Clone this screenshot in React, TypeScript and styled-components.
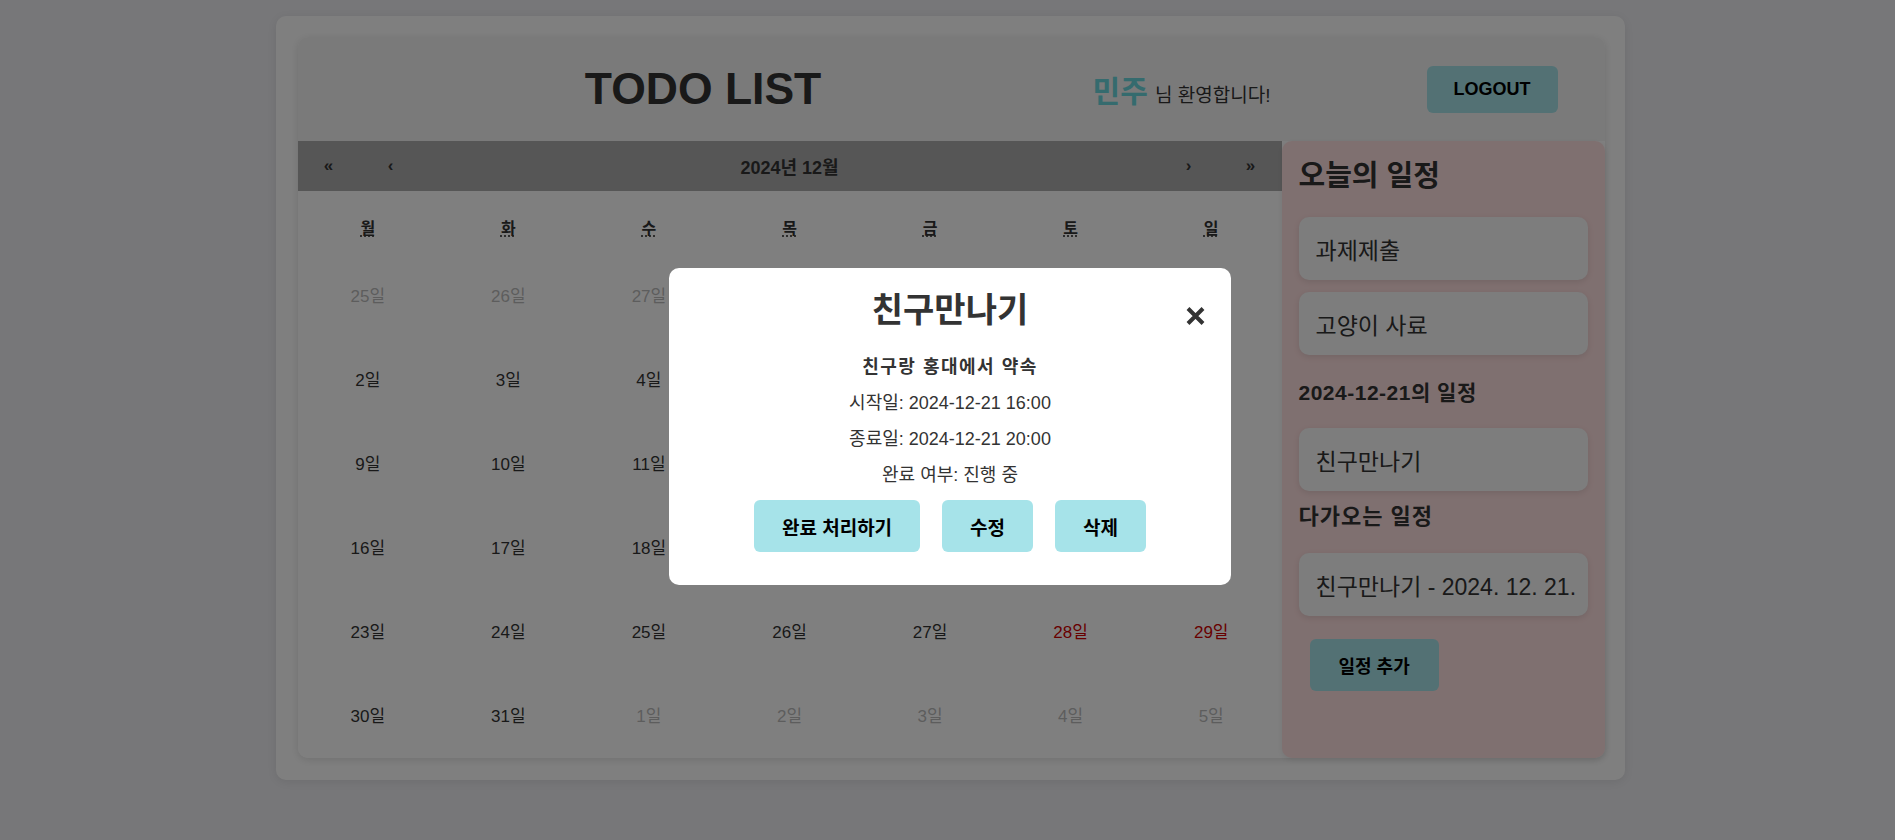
import React from "react";
import styled, { createGlobalStyle } from "styled-components";

const Global = createGlobalStyle`
  html, body { margin: 0; padding: 0; }
  body {
    background: #eeeef2;
    font-family: "Liberation Sans", "Noto Sans CJK KR", sans-serif;
    color: #333;
  }
  * { box-sizing: border-box; }
  button { font-family: inherit; cursor: pointer; }
`;

const Page = styled.div`
  padding-top: 16px;
  min-height: 840px;
`;

const Container = styled.div`
  width: 1349px;
  margin-left: calc(50% - 672px);
  background: #fff;
  border-radius: 10px;
  padding: 21px 20px 22px 22px;
  box-shadow: 0 2px 10px rgba(0, 0, 0, 0.08);
`;

const Board = styled.div`
  border-radius: 10px;
  box-shadow: 0 2px 8px rgba(0, 0, 0, 0.12);
`;

const Header = styled.header`
  height: 104px;
  background: #f5f5f5;
  border-radius: 10px 10px 0 0;
  display: flex;
  align-items: center;
  padding: 0 47px 0 16px;
`;

const TitleWrap = styled.div`
  flex: 1;
  text-align: center;
`;

const Title = styled.h1`
  margin: 0;
  font-size: 44.5px;
  line-height: 52px;
  font-weight: 700;
  color: #333;
`;

const Welcome = styled.div`
  margin-right: 156px;
  font-size: 19px;
  color: #333;
  white-space: nowrap;
`;

const UserName = styled.span`
  font-size: 30px;
  font-weight: 700;
  color: #6ad6dc;
  margin-right: 2px;
`;

const PrimaryButton = styled.button<{ $h: number; $px: number; $fs?: number }>`
  height: ${(p) => p.$h}px;
  padding: 0 ${(p) => p.$px}px;
  border: 0;
  border-radius: 6px;
  background: #a6e3e9;
  color: #000;
  font-size: ${(p) => p.$fs ?? 18}px;
  font-weight: 700;
  white-space: nowrap;
`;

const Main = styled.div`
  display: flex;
  align-items: stretch;
`;

const Calendar = styled.div`
  width: 984px;
  flex-shrink: 0;
  background: #fff;
  border-radius: 0 0 0 10px;
  padding-bottom: 2px;
`;

const Nav = styled.div`
  display: flex;
  height: 50px;
  background: #adadad;
`;

const NavBtn = styled.button`
  width: 62px;
  border: 0;
  background: none;
  font-size: 17px;
  font-weight: 700;
  color: #333;
  padding: 0;
`;

const NavLabel = styled.div`
  flex: 1;
  display: flex;
  align-items: center;
  justify-content: center;
  font-size: 18px;
  font-weight: 700;
  color: #333;
`;

const Weekdays = styled.div`
  display: grid;
  grid-template-columns: repeat(7, 1fr);
  height: 61px;
  align-items: end;
  padding-bottom: 13px;
`;

const Weekday = styled.div`
  text-align: center;
  font-size: 16px;
  line-height: 20px;
  font-weight: 700;
  color: #333;

  abbr {
    text-decoration: underline dotted;
    text-underline-offset: 2px;
  }
`;

const Days = styled.div`
  display: grid;
  grid-template-columns: repeat(7, 1fr);
  grid-auto-rows: 84px;
`;

const Day = styled.div<{ $tone: "normal" | "weekend" | "other" }>`
  display: flex;
  align-items: center;
  justify-content: center;
  font-size: 17px;
  color: ${(p) =>
    p.$tone === "weekend" ? "#d10000" : p.$tone === "other" ? "#bbbbbb" : "#333"};
`;

const Sidebar = styled.aside`
  flex: 1;
  min-width: 0;
  background: #ffe0e0;
  border-radius: 10px;
  padding: 15px 17px;
  display: flex;
  flex-direction: column;
  box-shadow: 0 2px 6px rgba(0, 0, 0, 0.08);
`;

const SectionTitle = styled.h2<{ $size: number; $lh: number; $ls: number; $mt: number }>`
  margin: ${(p) => p.$mt}px 0 21px;
  font-size: ${(p) => p.$size}px;
  line-height: ${(p) => p.$lh}px;
  letter-spacing: ${(p) => p.$ls}px;
  font-weight: 700;
  color: #333;
`;

const TaskList = styled.div`
  display: flex;
  flex-direction: column;
  gap: 12px;
`;

const TaskCard = styled.div`
  height: 63px;
  display: flex;
  align-items: center;
  padding: 0 12px 0 17px;
  background: #fafafa;
  border-radius: 10px;
  box-shadow: 0 2px 6px rgba(0, 0, 0, 0.1);
  font-size: 23px;
  color: #333;
  white-space: nowrap;
  overflow: hidden;
`;

const AddWrap = styled.div`
  margin: 23px 0 0 11px;
`;

const Overlay = styled.div`
  position: fixed;
  inset: 0;
  background: rgba(0, 0, 0, 0.5);
  display: flex;
  align-items: center;
  justify-content: center;
  padding-top: 13px;
  padding-left: 5px;
`;

const Modal = styled.div`
  position: relative;
  width: 562px;
  background: #fff;
  border-radius: 10px;
  padding: 22px 30px 33px;
  display: flex;
  flex-direction: column;
  align-items: center;
`;

const ModalTitle = styled.h2`
  margin: 0;
  font-size: 34px;
  line-height: 40px;
  font-weight: 700;
  color: #333;
`;

const CloseBtn = styled.button`
  position: absolute;
  top: 39px;
  right: 26px;
  width: 19px;
  height: 18px;
  padding: 0;
  border: 0;
  background: none;
  display: flex;
`;

const Desc = styled.p`
  margin: 25px 0 0;
  font-size: 18px;
  line-height: 24px;
  font-weight: 700;
  letter-spacing: 1.5px;
  color: #333;
`;

const Info = styled.p`
  margin: 12px 0 0;
  font-size: 18px;
  line-height: 24px;
  color: #333;
`;

const Actions = styled.div`
  display: flex;
  gap: 22px;
  margin-top: 13px;
`;

type Tone = "normal" | "weekend" | "other";

function buildDays(): { n: number; tone: Tone }[] {
  const out: { n: number; tone: Tone }[] = [];
  for (let i = 0; i < 42; i++) {
    const col = i % 7;
    let n: number;
    let current = true;
    if (i < 6) {
      n = 25 + i;
      current = false;
    } else if (i - 5 <= 31) {
      n = i - 5;
    } else {
      n = i - 36;
      current = false;
    }
    const tone: Tone = !current ? "other" : col >= 5 ? "weekend" : "normal";
    out.push({ n, tone });
  }
  return out;
}

const weekdays = ["월", "화", "수", "목", "금", "토", "일"];
const weekdayFull = ["월요일", "화요일", "수요일", "목요일", "금요일", "토요일", "일요일"];

export default function App() {
  const days = buildDays();
  return (
    <>
      <Global />
      <Page>
        <Container>
          <Board>
            <Header>
              <TitleWrap>
                <Title>TODO LIST</Title>
              </TitleWrap>
              <Welcome>
                <UserName>민주</UserName> 님 환영합니다!
              </Welcome>
              <PrimaryButton $h={47} $px={27}>LOGOUT</PrimaryButton>
            </Header>
            <Main>
              <Calendar>
                <Nav>
                  <NavBtn>«</NavBtn>
                  <NavBtn>‹</NavBtn>
                  <NavLabel>2024년 12월</NavLabel>
                  <NavBtn>›</NavBtn>
                  <NavBtn>»</NavBtn>
                </Nav>
                <Weekdays>
                  {weekdays.map((w, i) => (
                    <Weekday key={w}>
                      <abbr title={weekdayFull[i]}>{w}</abbr>
                    </Weekday>
                  ))}
                </Weekdays>
                <Days>
                  {days.map((d, i) => (
                    <Day key={i} $tone={d.tone}>
                      {d.n}일
                    </Day>
                  ))}
                </Days>
              </Calendar>
              <Sidebar>
                <SectionTitle $size={29} $lh={40} $ls={0} $mt={0}>
                  오늘의 일정
                </SectionTitle>
                <TaskList>
                  <TaskCard>과제제출</TaskCard>
                  <TaskCard>고양이 사료</TaskCard>
                </TaskList>
                <SectionTitle $size={21} $lh={28} $ls={0.5} $mt={24}>
                  2024-12-21의 일정
                </SectionTitle>
                <TaskList>
                  <TaskCard>친구만나기</TaskCard>
                </TaskList>
                <SectionTitle $size={22} $lh={30} $ls={1} $mt={11}>
                  다가오는 일정
                </SectionTitle>
                <TaskList>
                  <TaskCard>친구만나기 - 2024. 12. 21.</TaskCard>
                </TaskList>
                <AddWrap>
                  <PrimaryButton $h={52} $px={29}>일정 추가</PrimaryButton>
                </AddWrap>
              </Sidebar>
            </Main>
          </Board>
        </Container>
      </Page>
      <Overlay>
        <Modal>
          <ModalTitle>친구만나기</ModalTitle>
          <CloseBtn aria-label="닫기">
            <svg width="19" height="18" viewBox="0 0 19 18">
              <path d="M2 1.5 L17 16.5 M17 1.5 L2 16.5" stroke="#333" strokeWidth="4" />
            </svg>
          </CloseBtn>
          <Desc>친구랑 홍대에서 약속</Desc>
          <Info>시작일: 2024-12-21 16:00</Info>
          <Info>종료일: 2024-12-21 20:00</Info>
          <Info>완료 여부: 진행 중</Info>
          <Actions>
            <PrimaryButton $h={52} $px={28} $fs={19}>완료 처리하기</PrimaryButton>
            <PrimaryButton $h={52} $px={28} $fs={19}>수정</PrimaryButton>
            <PrimaryButton $h={52} $px={28} $fs={19}>삭제</PrimaryButton>
          </Actions>
        </Modal>
      </Overlay>
    </>
  );
}
